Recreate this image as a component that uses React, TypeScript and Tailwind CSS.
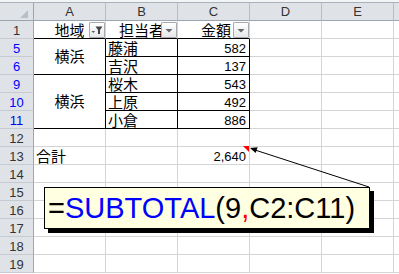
import React from "react"
import clsx from "clsx"

type CellProps = {
  children?: React.ReactNode
  className?: string
  rb?: boolean
  bb?: boolean
  noRight?: boolean
}

// worksheet cell with Excel-like gridlines; rb / bb switch a side to a black border
function Cell({ children, className, rb, bb, noRight }: CellProps) {
  return (
    <div
      className={clsx(
        "relative flex border-b",
        !noRight && "border-r",
        rb ? "border-r-black" : "border-r-[#d4d4d4]",
        bb ? "border-b-black" : "border-b-[#d4d4d4]",
        className
      )}
    >
      {children}
    </div>
  )
}

function RowHead({ label, blue }: { label: string; blue?: boolean }) {
  return (
    <div
      className={clsx(
        "flex items-center justify-center bg-[#dfe3e8] border-r border-b border-r-[#9da5af] border-b-[#c6cbd2] text-[13px] pt-[2px]",
        blue ? "text-[#0000ff]" : "text-[#333]"
      )}
    >
      {label}
    </div>
  )
}

function ColHead({ label, last }: { label?: string; last?: boolean }) {
  return (
    <div
      className={clsx(
        "flex items-center justify-center bg-[#dfe3e8] border-b border-b-[#9da5af] text-[13px] text-[#333]",
        !last && "border-r border-r-[#b7bdc5]"
      )}
    >
      {label}
    </div>
  )
}

function DropButton({ filtered }: { filtered?: boolean }) {
  return (
    <div className="absolute right-0 top-[1px] z-10 h-4 w-4 rounded-[1px] border border-[#a7abb0] bg-gradient-to-b from-white to-[#e6e8eb]">
      <svg width="14" height="14" viewBox="0 0 14 14">
        {filtered ? (
          <>
            <polygon points="1.5,8 5,8 3.25,10" fill="#555" />
            <polygon points="5.5,3.5 12.5,3.5 10,7 10,11 8,11 8,7" fill="#444" />
          </>
        ) : (
          <polygon points="3.5,6 10.5,6 7,9.5" fill="#666" />
        )}
      </svg>
    </div>
  )
}

function Blank({ last }: { last?: boolean }) {
  return <Cell noRight={last} />
}

function Trailing() {
  return (
    <>
      <Blank />
      <Blank />
      <Blank last />
    </>
  )
}

export default function App() {
  const plain = "text-[15px] leading-none text-black"
  const num = "items-center justify-end pr-[3px] pt-[3px] text-[13px] text-black"

  return (
    <div className="relative h-[274px] w-[399px] overflow-hidden bg-white font-['Liberation_Sans','Noto_Sans_CJK_JP',sans-serif]">
      {/* strip above the column headers */}
      <div className="h-[3px] border-b border-b-[#a9b1bb] bg-[#f3f4f6]" />

      <div className="grid grid-cols-[34px_72px_72px_72px_72px_72px_1fr] auto-rows-[18px]">
        {/* column headers */}
        <div className="relative bg-[#dfe3e8] border-r border-b border-r-[#9da5af] border-b-[#9da5af]">
          <svg className="absolute left-0 top-0" width="33" height="17" viewBox="0 0 33 17">
            <polygon points="28,7 28,15 20,15" fill="#b9bfc7" />
          </svg>
        </div>
        <ColHead label="A" />
        <ColHead label="B" />
        <ColHead label="C" />
        <ColHead label="D" />
        <ColHead label="E" />
        <ColHead last />

        {/* row 1: table header with filter buttons */}
        <RowHead label="1" />
        <Cell bb className={clsx(plain, "items-center justify-center pt-[1px]")}>
          地域
          <DropButton filtered />
        </Cell>
        <Cell bb className={clsx(plain, "items-center justify-center pt-[1px]")}>
          担当者
          <DropButton />
        </Cell>
        <Cell bb className={clsx(plain, "items-center justify-end pr-[18px] pt-[1px]")}>
          金額
          <DropButton />
        </Cell>
        <Trailing />

        {/* 横浜: rows 5-6 */}
        <RowHead label="5" blue />
        <Cell rb bb className={clsx(plain, "row-span-2 items-center justify-center")}>
          横浜
        </Cell>
        <Cell rb bb className={clsx(plain, "items-center pl-[2px] pt-[1px]")}>
          藤浦
        </Cell>
        <Cell rb bb className={num}>
          582
        </Cell>
        <Trailing />

        <RowHead label="6" blue />
        <Cell rb bb className={clsx(plain, "items-center pl-[2px] pt-[1px]")}>
          吉沢
        </Cell>
        <Cell rb bb className={num}>
          137
        </Cell>
        <Trailing />

        {/* 横浜: rows 9-11 */}
        <RowHead label="9" blue />
        <Cell rb bb className={clsx(plain, "row-span-3 items-center justify-center")}>
          横浜
        </Cell>
        <Cell rb bb className={clsx(plain, "items-center pl-[2px] pt-[1px]")}>
          桜木
        </Cell>
        <Cell rb bb className={num}>
          543
        </Cell>
        <Trailing />

        <RowHead label="10" blue />
        <Cell rb bb className={clsx(plain, "items-center pl-[2px] pt-[1px]")}>
          上原
        </Cell>
        <Cell rb bb className={num}>
          492
        </Cell>
        <Trailing />

        <RowHead label="11" blue />
        <Cell rb bb className={clsx(plain, "items-center pl-[2px] pt-[1px]")}>
          小倉
        </Cell>
        <Cell rb bb className={num}>
          886
        </Cell>
        <Trailing />

        <RowHead label="12" />
        <Blank />
        <Blank />
        <Blank />
        <Trailing />

        {/* total row with comment marker */}
        <RowHead label="13" />
        <Cell className={clsx(plain, "items-center pl-[2px] pt-[1px]")}>合計</Cell>
        <Blank />
        <Cell className={num}>
          2,640
          <svg className="absolute -top-px right-0 z-10" width="6" height="6" viewBox="0 0 6 6">
            <polygon points="0,0 6,0 6,6" fill="#ff0000" />
          </svg>
        </Cell>
        <Trailing />

        {["14", "15", "16", "17", "18", "19"].map((r) => (
          <React.Fragment key={r}>
            <RowHead label={r} />
            <Blank />
            <Blank />
            <Blank />
            <Trailing />
          </React.Fragment>
        ))}
      </div>

      {/* comment callout arrow */}
      <svg className="pointer-events-none absolute left-0 top-0 z-20" width="399" height="274" viewBox="0 0 399 274">
        <line x1="369" y1="187" x2="255" y2="150" stroke="#000" strokeWidth="1" />
        <polygon points="250,148 257.6,147.3 255.7,153" fill="#000" />
      </svg>

      {/* comment box */}
      <div className="absolute left-[44px] top-[187px] z-20 h-[42px] w-[326px] border border-black bg-[#ffffe1] pl-[3px] pt-[5px] text-[29px] leading-[30px] shadow-[4px_4px_0_#000] whitespace-nowrap">
        <span className="text-black">=</span>
        <span className="text-[#0000ff]">SUBTOTAL</span>
        <span className="text-black">(9</span>
        <span className="text-[#ff0000]">,</span>
        <span className="text-black">C2:C11)</span>
      </div>
    </div>
  )
}
